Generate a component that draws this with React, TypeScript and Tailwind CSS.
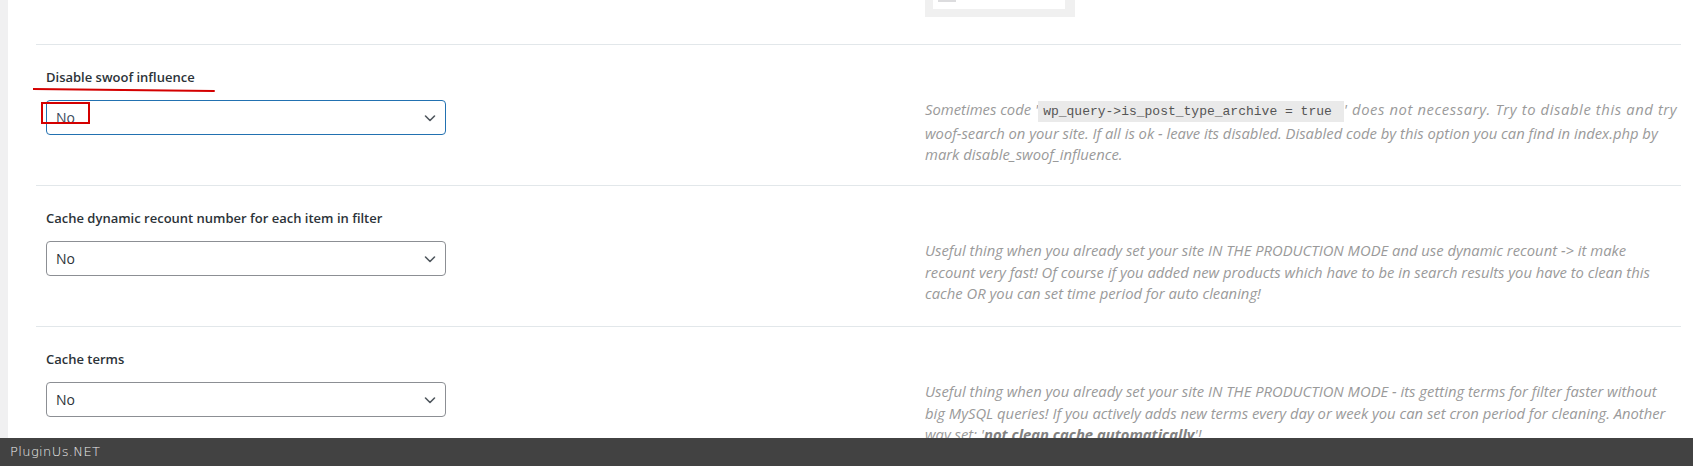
import React from "react";

const OptionSelect = ({ focused = false }: { focused?: boolean }) => (
	<div
		className={
			focused
				? "flex h-[35px] w-[400px] items-center justify-between rounded-[4px] border border-[#2271b1] bg-white pl-[9px] pr-[8px] text-[14px] text-[#3b4a5c]"
				: "flex h-[35px] w-[400px] items-center justify-between rounded-[4px] border border-[#8c8f94] bg-white pl-[9px] pr-[8px] text-[14px] text-[#2c3338]"
		}
	>
		<span>No</span>
		<svg width="14" height="14" viewBox="0 0 14 14" fill="none">
			<path
				d="M2.5 5 L7 9.5 L11.5 5"
				stroke="#50575e"
				strokeWidth="1.6"
				strokeLinecap="round"
				strokeLinejoin="round"
			/>
		</svg>
	</div>
);

const SettingRow = ({
	title,
	focused,
	children,
	annotated,
}: {
	title: string;
	focused?: boolean;
	children: React.ReactNode;
	annotated?: boolean;
}) => (
	<div className="relative grid h-[141px] grid-cols-[889px_1fr] border-t border-[#e2e7ea]">
		<div className="pl-[10px] pt-[22px]">
			<div className="text-[13px] font-semibold leading-[20px] text-[#2c3338]">
				{title}
			</div>
			<div className="mt-[13px]">
				<OptionSelect focused={focused} />
			</div>
		</div>
		<div className="pt-[54px]">
			<p className="whitespace-nowrap text-[14.8px] italic leading-[21.5px] text-[#9a9a9a]">
				{children}
			</p>
		</div>

		{/* red markup drawn over the screenshot */}
		{annotated && (
			<>
				<svg
					className="absolute left-[-3px] top-[42px]"
					width="184"
					height="6"
					viewBox="0 0 184 6"
				>
					<path
						d="M0 2 Q92 3.2 181 4"
						stroke="#d40000"
						strokeWidth="2"
						fill="none"
						strokeLinecap="round"
					/>
				</svg>
				<div className="absolute left-[5px] top-[57px] h-[22px] w-[49px] border-2 border-[#d40000]" />
			</>
		)}
	</div>
);

export default function App() {
	return (
		<div
			className="flex min-h-screen bg-white"
			style={{ fontFamily: "'Open Sans', 'Noto Sans', sans-serif" }}
		>
			<div className="w-[8px] shrink-0 bg-[#f0f0f1]" />
			<div className="flex-1 pl-[28px] pr-[12px]">
				{/* tail of the previous option, scrolled out of view */}
				<div className="grid h-[44px] grid-cols-[889px_1fr]">
					<div />
					<div>
						<div className="h-[17px] w-[150px] overflow-hidden bg-[#f0f0f0] px-[8px]">
							<div className="h-[9px] w-[132px] bg-white pl-[5px]">
								<div className="h-[2px] w-[18px] bg-[#dcdcde]" />
							</div>
							<div className="pl-[4px] pt-[6px] text-[11px] leading-[12px] text-[#8fb0cc]">
								Instead of tip
							</div>
						</div>
					</div>
				</div>

				<SettingRow title="Disable swoof influence" focused annotated>
					Sometimes code '
					<code
						className="bg-[#eaeaea] py-[3px] pl-[5px] pr-[12px] text-[13px] not-italic text-[#555]"
						style={{ fontFamily: "'Liberation Mono', monospace" }}
					>
						wp_query-&gt;is_post_type_archive = true
					</code>
					<span className="tracking-[0.6px]">
						' does not necessary. Try to disable this and try
					</span>
					<br />
					woof-search on your site. If all is ok - leave its disabled. Disabled
					code by this option you can find in index.php by
					<br />
					mark disable_swoof_influence.
				</SettingRow>

				<SettingRow title="Cache dynamic recount number for each item in filter">
					Useful thing when you already set your site IN THE PRODUCTION MODE
					and use dynamic recount -&gt; it make
					<br />
					recount very fast! Of course if you added new products which have to
					be in search results you have to clean this
					<br />
					cache OR you can set time period for auto cleaning!
				</SettingRow>

				<SettingRow title="Cache terms">
					Useful thing when you already set your site IN THE PRODUCTION MODE -
					its getting terms for filter faster without
					<br />
					big MySQL queries! If you actively adds new terms every day or week
					you can set cron period for cleaning. Another
					<br />
					way set: '<b className="text-[#808080]">not clean cache automatically</b>
					'!
				</SettingRow>
			</div>

			{/* bottom bar */}
			<div className="fixed bottom-0 left-0 right-0 flex h-[28px] items-center bg-[#424242] pl-[10px]">
				<span
					className="text-[13px] font-light tracking-[0.4px] text-[#ececec]"
					style={{ fontFamily: "'DejaVu Sans', sans-serif" }}
				>
					PluginUs.NET
				</span>
			</div>
		</div>
	);
}
